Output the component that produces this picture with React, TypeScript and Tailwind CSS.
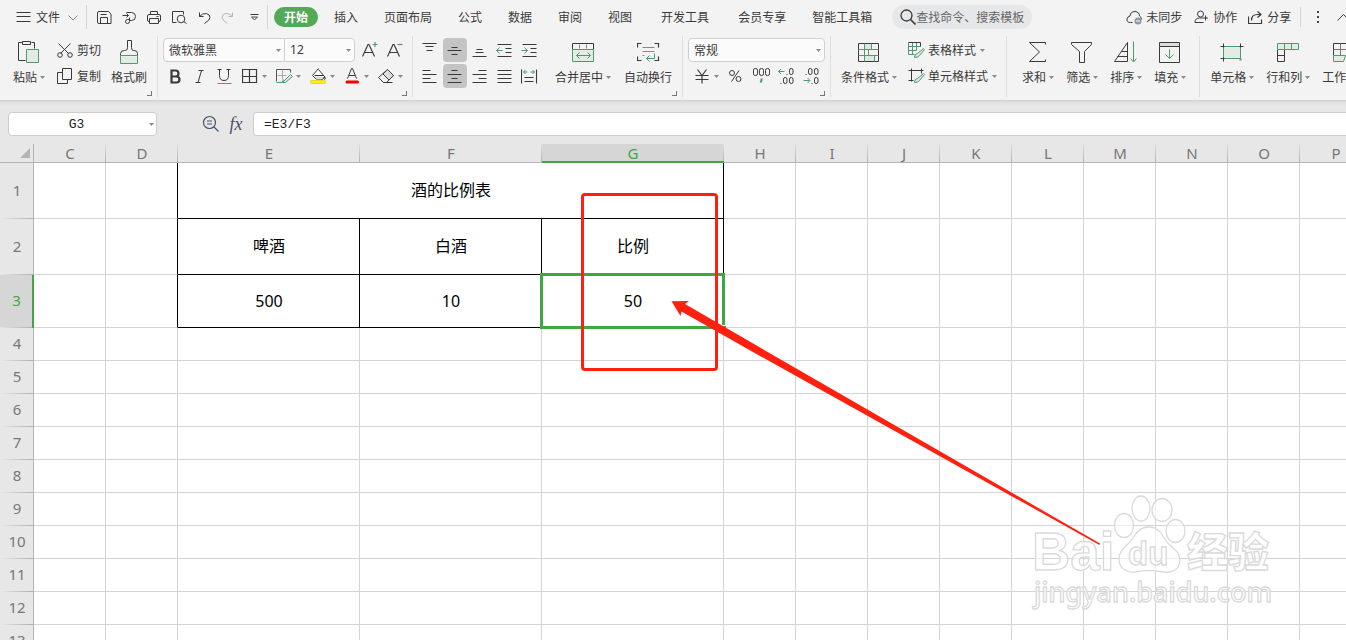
import type { ReactNode } from 'react';
import clsx from 'clsx';

const GREEN = '#4f9a70';

const tabs = ['插入', '页面布局', '公式', '数据', '审阅', '视图', '开发工具', '会员专享', '智能工具箱'];

const columns = [
  { name: 'C', width: 'w-[72px]' },
  { name: 'D', width: 'w-[72px]' },
  { name: 'E', width: 'w-[182px]' },
  { name: 'F', width: 'w-[182px]' },
  { name: 'G', width: 'w-[182px]' },
  ...['H', 'I', 'J', 'K', 'L', 'M', 'N', 'O', 'P'].map((name) => ({ name, width: 'w-[72px]' })),
];

const rows = [
  { n: 1, height: 'h-[56px]' },
  { n: 2, height: 'h-[56px]' },
  { n: 3, height: 'h-[53px]' },
  ...[4, 5, 6, 7, 8, 9, 10, 11, 12, 13].map((n) => ({ n, height: 'h-[33px]' })),
];

const cells: Record<string, string> = {
  E1: '酒的比例表',
  E2: '啤酒',
  F2: '白酒',
  G2: '比例',
  E3: '500',
  F3: '10',
  G3: '50',
};

// Integer coordinates land on pixel centres
function Svg({ w, h, children, className }: { w: number; h: number; children: ReactNode; className?: string }) {
  return (
    <svg
      width={w}
      height={h}
      viewBox={`-0.5 -0.5 ${w} ${h}`}
      fill="none"
      stroke="currentColor"
      strokeWidth="1"
      className={clsx('shrink-0', className)}
      aria-hidden="true"
    >
      {children}
    </svg>
  );
}

function Caret({ className }: { className?: string }) {
  return (
    <svg width="5" height="3" viewBox="0 0 5 3" className={clsx('shrink-0', className)} aria-hidden="true">
      <path d="M0 0h5L2.5 3z" fill="#8a8a8a" />
    </svg>
  );
}

/* ---------- quick access icons ---------- */

const SaveIcon = () => (
  <Svg w={15} h={15}>
    <path d="M0 2.500Q0 1 1.500 1H11l2.500 2.500V13H1.500Q0 13 0 11.500zM3 13V7H10V13M3 4H9" />
  </Svg>
);
const ExportIcon = () => (
  <Svg w={15} h={15}>
    <path d="M4 2H9a4 4 0 0 1 0 8H7M0 5h6M4 3l2 2-2 2M7 7v4a2 2 0 1 1-2-2h2" />
  </Svg>
);
const PrintIcon = () => (
  <Svg w={15} h={15}>
    <path d="M3 4V1H10V4M2 11H1.500Q0 11 0 9.500V5.500Q0 4 1.500 4H11.500Q13 4 13 5.500V9.500Q13 11 11.500 11H11M2 8H11V13H2zM9 6h2" />
  </Svg>
);
const PreviewIcon = () => (
  <Svg w={16} h={15}>
    <path d="M4 12H0V1H11V4M11 11l3 2" />
    <circle cx="8.500" cy="8.500" r="3.800" />
  </Svg>
);
const UndoIcon = ({ flip }: { flip?: boolean }) => (
  <Svg w={13} h={13} className={flip ? '-scale-x-100 text-[#b5b5b5]' : ''}>
    <path d="M1 1V5H5M1 5Q4 1.500 8 2Q11.500 3 11.500 6Q11.500 8.500 6 12" />
  </Svg>
);

/* ---------- clipboard ---------- */

const PasteIcon = () => (
  <Svg w={22} h={24}>
    <path d="M7 20H0V2H4M13 2H16V8M4 1H12V4H4z" />
    <path d="M8 9H20V22H8z" fill="#e2ece5" stroke={GREEN} />
  </Svg>
);
const CutIcon = () => (
  <Svg w={16} h={16}>
    <path d="M1 1L11 11M13 1L3 11" />
    <circle cx="2.500" cy="12.500" r="2.300" />
    <circle cx="12.500" cy="12.500" r="2.300" />
  </Svg>
);
const CopyIcon = () => (
  <Svg w={16} h={16}>
    <path d="M5 0H14V11H5zM5 4H0V15H10V11" />
  </Svg>
);
const BrushIcon = () => (
  <Svg w={19} h={24}>
    <path d="M0 16H17V23H0z" fill="#e2ece5" stroke="none" />
    <path d="M0 15V13Q0 10 4 10H5Q7 10 7 7V0H11V7Q11 10 13 10H13.500Q17 10 17 13V15" />
    <path d="M0 15H17V23H0z" stroke={GREEN} />
  </Svg>
);

/* ---------- font ---------- */

const FontSizeIcon = ({ plus }: { plus?: boolean }) => (
  <Svg w={16} h={16}>
    <path d="M0 14L5.500 2H6.500L12 14M2 10H10" strokeWidth="1.200" />
    <path d={plus ? 'M10 2H15M12.500 -.5V4.500' : 'M10 2H15'} stroke={GREEN} strokeWidth="1.200" />
  </Svg>
);
const BordersIcon = () => (
  <Svg w={16} h={16}>
    <path d="M0 1H14V14H0zM7 1V14M0 8H14" strokeWidth="1.200" />
  </Svg>
);
const DrawBorderIcon = () => (
  <Svg w={17} h={16}>
    <path d="M0 13V1H14V4" stroke="#555" />
    <path d="M1 7H10M6 1V11" stroke="#aaa" />
    <path d="M0 14H6L14 6l2 2-7 6H6l1-3" fill="#dbe9e0" stroke={GREEN} />
  </Svg>
);
const BucketIcon = () => (
  <Svg w={17} h={16}>
    <path d="M8 0L2 7l4 4h6l2-3L8 1M4 7H13" fill="#fff" />
    <path d="M4 8H13L11 11H6z" fill="#ddd" stroke="none" />
    <path d="M14 8q2 2 0 3q-1-1 0-3" />
    <rect x="0" y="12" width="15" height="3" rx="1" fill="#fff200" stroke="#d9c400" strokeWidth=".6" />
  </Svg>
);
const FontColorIcon = () => (
  <Svg w={14} h={16}>
    <path d="M2 10L6 0H7L11 10M3.500 7H9.500" />
    <path d="M1.500 13.500H12" stroke="#f00000" strokeWidth="3" strokeLinecap="round" />
  </Svg>
);
const EraserIcon = () => (
  <Svg w={16} h={16}>
    <path d="M9 1L15 7L8 14H5L0 9z" />
    <path d="M9 1L15 7L10.500 11.500L4.500 5.500z" fill="#ddd" />
    <path d="M5 14H14" />
  </Svg>
);

/* ---------- alignment ---------- */

const alignIcons: { label: string; dark: string; green?: string; active?: boolean }[] = [
  { label: '顶端对齐', dark: 'M1 1H15M4 4H12M5 8H11' },
  { label: '垂直居中', dark: 'M5 5H11M1 8H15M5 12H11', active: true },
  { label: '底端对齐', dark: 'M5 7H11M4 10H12M1 14H15' },
  { label: '减少缩进', dark: 'M1 2H15M9 6H15M9 10H15M1 14H15', green: 'M0 8H6M3 5L0 8L3 11' },
  { label: '增加缩进', dark: 'M1 2H15M9 6H15M9 10H15M1 14H15', green: 'M0 8H6M3 5L6 8L3 11' },
  { label: '左对齐', dark: 'M1 2H9M1 6H15M1 10H9M1 14H15' },
  { label: '水平居中', dark: 'M5 2H11M1 6H15M5 10H11M1 14H15', active: true },
  { label: '右对齐', dark: 'M7 2H15M1 6H15M7 10H15M1 14H15' },
  { label: '两端对齐', dark: 'M1 2H15M1 6H15M1 10H15M1 14H15' },
  { label: '分散对齐', dark: 'M0 1V15M15 1V15M3 9H12M3 13H12', green: 'M2 3.500H6M4 1.500L2 3.500L4 5.500M9 3.500H13M11 1.500L13 3.500L11 5.500' },
];

const MergeIcon = () => (
  <Svg w={23} h={20}>
    <path d="M0 7H21V19H0z" fill="#e2ece5" stroke="none" />
    <path d="M0 7V1H21V7" />
    <path d="M7 2V6M14 2V6" stroke="#888" />
    <path d="M0 7H21V19H0zM4 13H18M7 10L4 13L7 16M15 10L18 13L15 16" stroke={GREEN} />
  </Svg>
);
const WrapIcon = () => (
  <Svg w={23} h={20}>
    <path d="M4 1H0V5M17 1H21V5M0 14V18H4M21 14V18H17" strokeWidth="1.200" />
    <path d="M5 5H17M5 9H17M5 13H7" stroke="#888" />
    <path d="M17 11V16H9M12 13L9 16L12 19" stroke={GREEN} />
  </Svg>
);

/* ---------- number ---------- */

const ThousandsIcon = () => (
  <Svg w={17} h={16}>
    {[0, 6, 12].map((x) => (
      <rect key={x} x={x} y="0" width="4" height="7" rx="1.800" />
    ))}
    <path d="M8 10V12L7 14" stroke={GREEN} strokeWidth="2" />
  </Svg>
);
const DecimalIcon = ({ more }: { more?: boolean }) => (
  <Svg w={17} h={17}>
    <rect x="11" y="0" width="3.500" height="6" rx="1.700" />
    <rect x="11" y="9" width="3.500" height="6" rx="1.700" />
    {more ? (
      <>
        <path d="M2 6H3M8 15H9" strokeWidth="1.200" />
        <rect x="5" y="0" width="3.500" height="6" rx="1.700" />
        <path d="M0 12H6M4 9.500L6.500 12L4 14.500" stroke={GREEN} />
      </>
    ) : (
      <>
        <path d="M8 6H9M2 15H3" strokeWidth="1.200" />
        <rect x="5" y="9" width="3.500" height="6" rx="1.700" />
        <path d="M0 3H6M2.500 .5L0 3L2.500 5.500" stroke={GREEN} />
      </>
    )}
  </Svg>
);

/* ---------- styles ---------- */

const ConditionalIcon = () => (
  <Svg w={22} h={20}>
    <path d="M6 1H13V7H6zM6 13H16V19H6z" fill="#dbe9e0" stroke="none" />
    <path d="M0 1H20V19H0z" />
    <path d="M0 7H20M0 13H20M6 1V19M13 1V7M10 7V13M16 13V19" stroke={GREEN} />
  </Svg>
);
const TableStyleIcon = () => (
  <Svg w={17} h={16}>
    <path d="M0 12V0M0 4H12M0 8H8M0 12H6M4 0V12M8 0V8" stroke={GREEN} />
    <path d="M0 0H12V4" />
    <path d="M6 15Q6 11 9 11L15 6L16 7L11 13Q10 15 6 15z" fill="#dbe9e0" stroke={GREEN} />
  </Svg>
);
const CellStyleIcon = () => (
  <Svg w={17} h={16}>
    <path d="M0 2H15M3 0V13M0 12H5M13 0V5" />
    <path d="M6 14Q6 10 9 10L15 5L16 6L11 12Q10 14 6 14z" fill="#dbe9e0" stroke={GREEN} />
  </Svg>
);

/* ---------- editing ---------- */

const SumIcon = () => (
  <Svg w={20} h={22}>
    <path d="M17 3V1H1L11 10.500L1 20H17V18" />
  </Svg>
);
const FilterIcon = () => (
  <Svg w={22} h={22}>
    <path d="M0 1H20V3L13 10V21H8V10L0 3z" />
  </Svg>
);
const SortIcon = () => (
  <Svg w={24} h={22}>
    <path d="M0 20H13V1zM3 15H13M7 10H13" />
    <path d="M19 0V20M16 17L19 20.500L22 17" stroke={GREEN} />
  </Svg>
);
const FillIcon = () => (
  <Svg w={22} h={22}>
    <path d="M0 1H20V5H0z" fill="#ddd" />
    <path d="M0 5V21H20V5" />
    <path d="M10 8V17M6 13L10 17L14 13" stroke={GREEN} />
  </Svg>
);
const CellIcon = () => (
  <Svg w={24} h={20}>
    <path d="M3 4H20V16H3z" fill="#e2ece5" stroke={GREEN} />
    <path d="M0 4H4M3 1V5M20 1V5M19 4H23M0 16H4M3 15V19" />
    <path d="M20 16V18" stroke={GREEN} strokeWidth="2" />
  </Svg>
);
const RowColIcon = () => (
  <Svg w={23} h={20}>
    <path d="M0 7V19H7V7M0 13H7" />
    <path d="M0 1H21V7H0zM7 1V7M14 1V7" fill="#e2ece5" stroke={GREEN} />
  </Svg>
);
const WorksheetIcon = () => (
  <Svg w={22} h={20}>
    <path d="M0 13V1H21V13" />
    <path d="M0 7H21M7 1V13M14 1V13" stroke="#777" />
    <path d="M0 13H12L10 19H0z" fill="#e2ece5" stroke={GREEN} />
  </Svg>
);

/* ---------- ribbon parts ---------- */

function Group({ children, className, launcher }: { children: ReactNode; className?: string; launcher?: boolean }) {
  return (
    <div className={clsx('relative flex h-[61px] shrink-0 items-start border-r border-[#dedede] pt-[2px]', className)}>
      {children}
      {launcher && <span className="absolute right-[5px] bottom-px h-[5px] w-[5px] border-r border-b border-[#777]" />}
    </div>
  );
}

function BigButton({ icon, label, caret = true }: { icon: ReactNode; label: string; caret?: boolean }) {
  return (
    <button className="flex shrink-0 flex-col items-center">
      <span className="flex h-7 items-center">{icon}</span>
      <span className="flex h-[22px] items-center gap-[3px] whitespace-nowrap">
        {label}
        {caret && <Caret />}
      </span>
    </button>
  );
}

function RowButton({ icon, label, caret }: { icon: ReactNode; label: string; caret?: boolean }) {
  return (
    <button className="flex h-6 items-center gap-1 whitespace-nowrap">
      <span className="flex w-4">{icon}</span>
      {label}
      {caret && <Caret />}
    </button>
  );
}

function ToolButton({ label, active, caret, children }: { label: string; active?: boolean; caret?: boolean; children: ReactNode }) {
  return (
    <button aria-label={label} className={clsx('flex h-6 shrink-0 items-center rounded', active && 'bg-[#c4c4c4]')}>
      <span className="flex w-6 justify-center">{children}</span>
      {caret && <Caret />}
    </button>
  );
}

function Combo({ label, value, className }: { label: string; value: string; className?: string }) {
  return (
    <label className={clsx('relative block h-6 border border-[#d0d0d0] bg-[#fbfbfb]', className)}>
      <select aria-label={label} defaultValue={value} className="h-full w-full appearance-none pl-[5px] outline-none">
        <option>{value}</option>
      </select>
      <Caret className="absolute top-[10px] right-[3px]" />
    </label>
  );
}

function TopBar() {
  return (
    <div className="flex h-[34px] items-center whitespace-nowrap *:shrink-0">
      <button className="ml-4 flex items-center">
        <Svg w={15} h={12}>
          <path d="M0 1H14M0 5H14M0 10H14" />
        </Svg>
        <span className="ml-[5px]">文件</span>
        <Svg w={10} h={7} className="ml-2 text-[#888]">
          <path d="M0 1L4.500 5.500L9 1" />
        </Svg>
      </button>
      <span className="ml-2 h-6 w-px bg-[#d4d4d4]" />
      <div className="ml-[10px] flex items-center gap-[10px]">
        <button aria-label="保存"><SaveIcon /></button>
        <button aria-label="输出"><ExportIcon /></button>
        <button aria-label="打印"><PrintIcon /></button>
        <button aria-label="打印预览"><PreviewIcon /></button>
        <button aria-label="撤销"><UndoIcon /></button>
        <button aria-label="恢复"><UndoIcon flip /></button>
      </div>
      <button aria-label="更多" className="ml-4">
        <Svg w={9} h={8}>
          <path d="M0 1H8" />
          <path d="M1 3.500H7L4 6.500z" strokeWidth=".9" />
        </Svg>
      </button>
      <span className="ml-2 h-6 w-px bg-[#d4d4d4]" />
      <button className="mr-[3px] ml-[6px] h-5 w-11 rounded-full bg-[#52a957] font-bold text-white">开始</button>
      {tabs.map((tab) => (
        <button key={tab} className={tab === '开发工具' ? 'px-4' : 'px-[13px]'}>
          {tab}
        </button>
      ))}
      <label className="ml-[7px] flex h-6 w-[140px] items-center rounded-full bg-[#e6e7e9] pl-2">
        <Svg w={16} h={16}>
          <circle cx="6" cy="6" r="5.500" strokeWidth="1.300" />
          <path d="M10 10L15 15" strokeWidth="1.600" />
        </Svg>
        <input
          aria-label="搜索"
          placeholder="查找命令、搜索模板"
          className="w-[112px] bg-transparent outline-none placeholder:text-[#666]"
        />
      </label>
      <button className="ml-[94px] flex items-center gap-1">
        <Svg w={16} h={15}>
          <path d="M6 12H4Q0 12 .5 8.500Q1 6 3.500 5.500Q4 1 8.500 1Q13 1.500 13 5.500Q15 6.500 15 9" />
          <circle cx="11.500" cy="10.500" r="3.500" fill="#8d97ad" stroke="none" />
          <path d="M9.500 10.500H13.500" stroke="#fff" />
        </Svg>
        未同步
      </button>
      <button className="ml-3 flex items-center gap-1">
        <Svg w={15} h={14}>
          <circle cx="6" cy="3.500" r="3" />
          <path d="M9 12H.5Q.5 7.500 5 7.500H8M8 7.500H13.500M11 5V10" />
        </Svg>
        协作
      </button>
      <button className="ml-[11px] flex items-center gap-1">
        <Svg w={15} h={15}>
          <path d="M0 6V13H13V9M3 10Q3 4 9 4H12M9 1L12.500 4L9 7" strokeWidth="1.200" />
        </Svg>
        分享
      </button>
      <span className="ml-[9px] h-5 w-px bg-[#d4d4d4]" />
      <button aria-label="选项" className="ml-4">
        <svg width="3" height="12" fill="#444">
          <path d="M0 0h2v2H0zM0 5h2v2H0zM0 10h2v2H0z" />
        </svg>
      </button>
      <button aria-label="收起功能区" className="ml-[17px]">
        <Svg w={14} h={8}>
          <path d="M0 7L6 1L12 7" />
        </Svg>
      </button>
    </div>
  );
}

function Ribbon() {
  return (
    <div className="flex h-[66px] pt-[2px]">
      <Group className="pr-[10px] pl-[13px]" launcher>
        <BigButton icon={<PasteIcon />} label="粘贴" />
        <div className="mr-[10px] ml-3 flex flex-col gap-[2px]">
          <RowButton icon={<CutIcon />} label="剪切" />
          <RowButton icon={<CopyIcon />} label="复制" />
        </div>
        <BigButton icon={<BrushIcon />} label="格式刷" caret={false} />
      </Group>

      <Group className="flex-col gap-[2px] px-[5px]" launcher>
        <div className="flex items-center">
          <Combo label="字体" value="微软雅黑" className="w-[122px] rounded-l" />
          <Combo label="字号" value="12" className="-ml-px w-[71px] rounded-r font-['Noto_Sans',sans-serif]" />
          <div className="ml-[3px] flex gap-px">
            <ToolButton label="增大字号"><FontSizeIcon plus /></ToolButton>
            <ToolButton label="减小字号"><FontSizeIcon /></ToolButton>
          </div>
        </div>
        <div className="flex items-center">
          <div className="mr-px flex gap-px">
            <ToolButton label="加粗">
              <Svg w={12} h={15}>
                <path d="M2 1H6Q9 1 9 4Q9 7 6 7H2zM2 7H7Q10 7 10 10Q10 13 7 13H2z" strokeWidth="2.200" />
              </Svg>
            </ToolButton>
            <ToolButton label="倾斜">
              <Svg w={10} h={15}>
                <path d="M3 1H8M0 13H5M6 1L2.500 13" />
              </Svg>
            </ToolButton>
            <ToolButton label="下划线">
              <Svg w={16} h={17}>
                <path d="M0 1H4M9 1H13M2 1V7Q2 12 6.500 12Q11 12 11 7V1" />
                <path d="M0 15H14" stroke={GREEN} />
              </Svg>
            </ToolButton>
          </div>
          <div className="flex gap-[5px]">
            <ToolButton label="边框" caret><BordersIcon /></ToolButton>
            <ToolButton label="绘图边框" caret><DrawBorderIcon /></ToolButton>
            <ToolButton label="填充颜色" caret><BucketIcon /></ToolButton>
            <ToolButton label="字体颜色" caret><FontColorIcon /></ToolButton>
            <ToolButton label="清除" caret><EraserIcon /></ToolButton>
          </div>
        </div>
      </Group>

      <Group className="gap-[13px] pr-[10px] pl-[5px]" launcher>
        <div className="grid grid-cols-5 gap-x-px gap-y-[2px]">
          {alignIcons.map((icon) => (
            <ToolButton key={icon.label} label={icon.label} active={icon.active}>
              <Svg w={18} h={16}>
                <path d={icon.dark} strokeWidth="1.100" />
                {icon.green && <path d={icon.green} stroke={GREEN} />}
              </Svg>
            </ToolButton>
          ))}
        </div>
        <BigButton icon={<MergeIcon />} label="合并居中" />
        <BigButton icon={<WrapIcon />} label="自动换行" caret={false} />
      </Group>

      <Group className="flex-col gap-[2px] px-[5px]" launcher>
        <Combo label="数字格式" value="常规" className="w-[137px] rounded" />
        <div className="ml-[2px] flex">
          <ToolButton label="货币" caret>
            <Svg w={14} h={15}>
              <path d="M2 0L6.500 6L11 0M0 6H13M0 10H13M6.500 6V14" strokeWidth="1.200" />
            </Svg>
          </ToolButton>
          <div className="ml-[5px] flex gap-px">
            <ToolButton label="百分比">
              <Svg w={14} h={14}>
                <circle cx="2.500" cy="3.500" r="2.500" />
                <circle cx="9" cy="9.500" r="2.500" />
                <path d="M9.500 1L2 12" />
              </Svg>
            </ToolButton>
            <ToolButton label="千位分隔"><ThousandsIcon /></ToolButton>
            <ToolButton label="增加小数位"><DecimalIcon /></ToolButton>
            <ToolButton label="减少小数位"><DecimalIcon more /></ToolButton>
          </div>
        </div>
      </Group>

      <Group className="gap-[11px] pr-[9px] pl-[10px]">
        <BigButton icon={<ConditionalIcon />} label="条件格式" />
        <div className="flex flex-col gap-[2px]">
          <RowButton icon={<TableStyleIcon />} label="表格样式" caret />
          <RowButton icon={<CellStyleIcon />} label="单元格样式" caret />
        </div>
      </Group>

      <Group className="gap-3 pr-[13px] pl-[15px]">
        <BigButton icon={<SumIcon />} label="求和" />
        <BigButton icon={<FilterIcon />} label="筛选" />
        <BigButton icon={<SortIcon />} label="排序" />
        <BigButton icon={<FillIcon />} label="填充" />
      </Group>

      <Group className="gap-3 pl-[10px]">
        <BigButton icon={<CellIcon />} label="单元格" />
        <BigButton icon={<RowColIcon />} label="行和列" />
        <BigButton icon={<WorksheetIcon />} label="工作表" />
      </Group>
    </div>
  );
}

function FormulaBar() {
  return (
    <div className="flex h-11 items-center border-t border-[#d0d0d0] bg-linear-to-b from-[#dcdcdc] to-[#e7e7e7] to-10% pt-[3px] pl-2 font-['Liberation_Mono','Noto_Sans_CJK_SC',monospace] text-[13px] text-[#222]">
      <label className="relative block h-6 w-[149px] shrink-0">
        <input
          aria-label="名称框"
          defaultValue="G3"
          className="h-full w-full rounded border border-[#cdcdcd] bg-white pt-px pr-3 text-center outline-none"
        />
        <Caret className="absolute top-[11px] right-[3px]" />
      </label>
      <button aria-label="缩小" className="ml-11 text-[#47506b]">
        <Svg w={18} h={18}>
          <circle cx="8" cy="7" r="6" strokeWidth="1.200" />
          <path d="M5.500 5.500H10.500M5.500 8.500H10.500M12.500 11.500L17 16" strokeWidth="1.200" />
        </Svg>
      </button>
      <button aria-label="插入函数" className="ml-[9px] w-4 font-['Liberation_Serif',serif] text-lg leading-5 text-[#47506b] italic">
        fx
      </button>
      <input
        aria-label="编辑栏"
        defaultValue="=E3/F3"
        className="ml-[9px] h-6 min-w-0 flex-1 rounded-l border border-r-0 border-[#cdcdcd] bg-white pt-px pl-[10px] outline-none"
      />
    </div>
  );
}

function Watermark() {
  return (
    <svg
      className="pointer-events-none absolute top-[346px] left-[1030px]"
      width="246"
      height="124"
      viewBox="1030 490 246 124"
      fill="#fff"
      fillOpacity=".6"
      stroke="#dadada"
      strokeWidth="1.300"
      aria-hidden="true"
    >
      <text x="1032" y="570" fontSize="53" fontFamily="'Liberation Sans', sans-serif" fontWeight="bold">Bai</text>
      <ellipse cx="1124" cy="525.500" rx="9.500" ry="12" />
      <ellipse cx="1141" cy="508.500" rx="9" ry="12.500" />
      <ellipse cx="1162" cy="510" rx="10" ry="11.500" />
      <ellipse cx="1175.500" cy="531" rx="9.500" ry="11.500" />
      <path d="M1149 527C1158 527 1162 534 1166 541C1170 547 1180 550 1180 561C1179 571 1170 573 1163 572C1153 570 1144 570 1135 572C1125 573 1119 567 1119 559C1119 549 1129 545 1133 538C1137 531 1141 527 1149 527z" />
      <text x="1128" y="565" fontSize="33" fontFamily="'Liberation Sans', sans-serif" fontWeight="bold">du</text>
      <text x="1187" y="567" fontSize="41" fontFamily="'Noto Sans CJK SC', sans-serif" fontWeight="900">经验</text>
      <text x="1034" y="602" fontSize="27" fontFamily="'Noto Sans', sans-serif" fontWeight="500">jingyan.baidu.com</text>
    </svg>
  );
}

function Sheet() {
  return (
    <main className="relative min-h-0 flex-1 overflow-hidden bg-white font-['Noto_Sans','Noto_Sans_CJK_SC',sans-serif]">
      <table className="w-0 table-fixed border-separate border-spacing-0 text-center">
        <thead>
          <tr className="h-[19px] text-[15px] leading-4 text-[#777]">
            <th className="w-[34px] border-r border-b border-[#b5b5b5] bg-[#e7e7e7] p-0">
              <svg width="10" height="10" className="ml-5" fill="#b5b5b5" aria-hidden="true">
                <path d="M10 0V10H0z" />
              </svg>
            </th>
            {columns.map((col) => (
              <th
                key={col.name}
                className={clsx(
                  'bg-[linear-gradient(to_bottom,#e0e0e0,#b0b0b0)] bg-[length:1px_100%] bg-right bg-no-repeat p-0 font-normal',
                  col.width,
                  col.name === 'G'
                    ? 'border-b-2 border-[#3fa744] bg-[#d6d6d6] text-[#3fa744]'
                    : 'border-b border-[#b5b5b5] bg-[#e7e7e7]',
                )}
              >
                {col.name}
              </th>
            ))}
          </tr>
        </thead>
        <tbody>
          {rows.map((row) => (
            <tr key={row.n} className={row.height}>
              <th
                className={clsx(
                  'bg-[linear-gradient(to_right,#e7e7e7,#b0b0b0)] bg-[length:100%_1px] bg-bottom bg-no-repeat p-0 pb-[3px] pl-px text-[15px] leading-5 font-normal',
                  row.n === 3
                    ? 'border-r-2 border-[#3fa744] bg-[#d6d6d6] text-[#3fa744]'
                    : 'border-r border-[#b5b5b5] bg-[#e7e7e7] text-[#777]',
                )}
              >
                {row.n}
              </th>
              {columns.map((col) => {
                const title = row.n === 1 && col.name === 'E';
                if (row.n === 1 && (col.name === 'F' || col.name === 'G')) return null;
                const inTable = row.n <= 3 && 'EFG'.includes(col.name);
                const beforeTable = row.n <= 3 && col.name === 'D';
                return (
                  <td
                    key={col.name}
                    colSpan={title ? 3 : 1}
                    className={clsx(
                      'border-r border-b p-0 pl-px text-base text-black',
                      row.n < 3 && 'pb-[2px]',
                      inTable ? 'border-black' : 'border-[#d4d4d4]',
                      beforeTable && 'border-r-black',
                    )}
                  >
                    {cells[col.name + row.n]}
                  </td>
                );
              })}
            </tr>
          ))}
        </tbody>
      </table>

      {/* active cell */}
      <div className="absolute top-[129px] left-[540px] h-[56px] w-[185px] border-3 border-[#3fa744]">
        <span className="absolute -right-1 -bottom-1 h-[5px] w-[5px] border-t border-l border-white bg-[#3fa744]" />
      </div>

      <Watermark />

      <div className="absolute top-[49px] left-[581px] h-[178px] w-[137px] rounded border-3 border-[#ff2010]" />
      <svg
        className="absolute top-[157px] left-[671px]"
        width="430"
        height="245"
        viewBox="671 301 430 245"
        fill="#ff2010"
        aria-hidden="true"
      >
        <path d="M671.500 301.300L689 301L685 304L760 347.500L1100 543.500L1099.500 545L760 356L681.500 311.500L680.500 316z" />
      </svg>
    </main>
  );
}

export default function App() {
  return (
    <div className="flex h-screen flex-col overflow-hidden font-['Noto_Sans_CJK_SC',sans-serif] text-xs text-[#3a3a3a]">
      <header className="shrink-0 overflow-hidden bg-[#f3f3f3]">
        <TopBar />
        <Ribbon />
      </header>
      <FormulaBar />
      <Sheet />
    </div>
  );
}
